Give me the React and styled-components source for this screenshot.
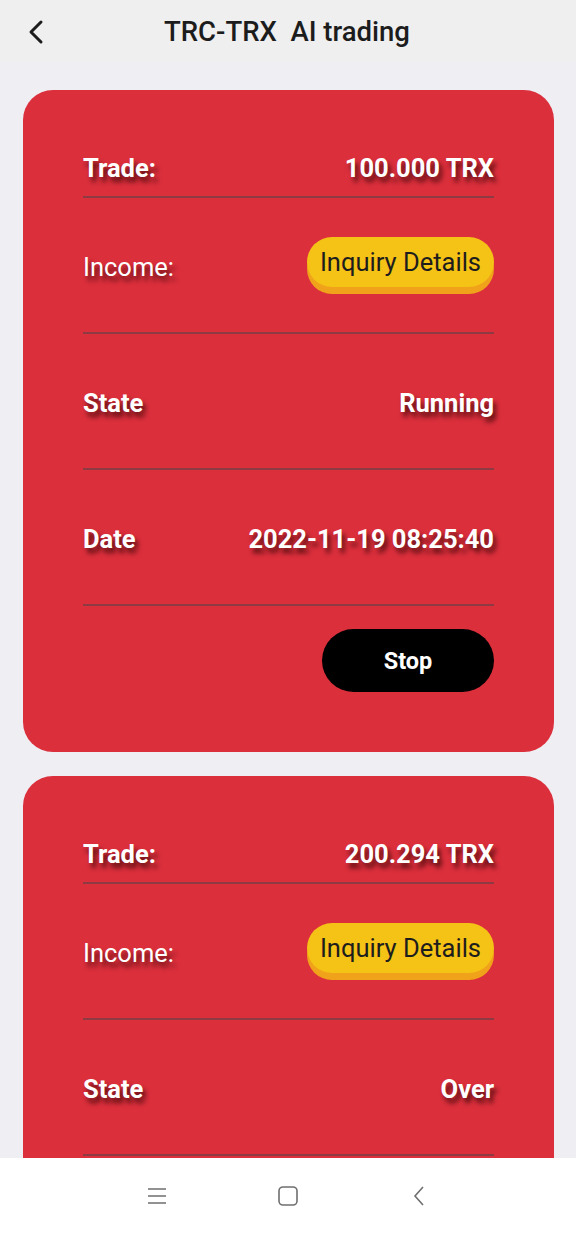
import React from "react"
import styled, { createGlobalStyle } from "styled-components"

const GlobalStyle = createGlobalStyle`
  html, body {
    margin: 0;
    padding: 0;
    background: #eeeef3;
    font-family: Roboto, "Noto Sans", sans-serif;
  }
`

const Page = styled.div`
  width: 576px;
  height: 1235px;
  display: flex;
  flex-direction: column;
  overflow: hidden;
  background: #eeeef3;
`

const Header = styled.header`
  flex: 0 0 62px;
  display: flex;
  align-items: center;
  justify-content: center;
  position: relative;
  background: #efefef;
`

const BackButton = styled.button`
  position: absolute;
  left: 22px;
  top: 17px;
  width: 28px;
  height: 30px;
  padding: 0;
  border: none;
  background: none;
  display: flex;
  align-items: center;
  justify-content: center;
`

const Title = styled.h1`
  margin: 0 0 0 -2px;
  font-size: 27.5px;
  font-weight: 500;
  color: #1c1c1c;
  white-space: pre;
`

const List = styled.main`
  flex: 1;
  overflow: hidden;
  display: flex;
  flex-direction: column;
  gap: 24px;
  padding: 28px 22px 0 23px;
`

const Card = styled.section`
  flex-shrink: 0;
  background: #dc2f3c;
  border-radius: 30px;
  padding: 44px 60px 60px;
  display: flex;
  flex-direction: column;
`

const Row = styled.div`
  height: ${(p) => (p.$first ? 64 : 136)}px;
  box-sizing: border-box;
  padding-top: ${(p) => (p.$first ? 6 : 4)}px;
  display: flex;
  align-items: center;
  justify-content: space-between;
  border-bottom: 2px solid #8e3a42;
`

const Label = styled.span`
  color: #fff;
  font-size: 25.5px;
  font-weight: ${(p) => (p.$light ? 400 : 700)};
  text-shadow: 3px 5px 5px rgba(40, 0, 0, 0.75);
`

const Value = styled(Label)`
  text-align: right;
`

const InquiryButton = styled.button`
  height: 50px;
  padding: 0 13px;
  border: none;
  border-radius: 25px;
  background: #f5c216;
  box-shadow: 0 7px 0 #f0a21a;
  margin-bottom: 10px;
  font-family: Roboto, sans-serif;
  font-size: 25.5px;
  color: #1d1d1d;
`

const Actions = styled.div`
  display: flex;
  justify-content: flex-end;
  padding-top: 23px;
`

const StopButton = styled.button`
  width: 172px;
  height: 63px;
  border: none;
  border-radius: 32px;
  background: #000;
  color: #fff;
  font-family: Roboto, sans-serif;
  font-size: 23.5px;
  font-weight: 700;
`

const NavBar = styled.nav`
  flex: 0 0 77px;
  background: #fff;
  display: flex;
  align-items: center;
  justify-content: center;
  gap: 109px;
  padding-bottom: 2px;
  box-sizing: border-box;
`

const NavIcon = styled.svg`
  width: 22px;
  height: 22px;
  stroke: #6f6f6f;
  stroke-width: 1.6;
  fill: none;
`

const trades = [
  {
    amount: "100.000 TRX",
    state: "Running",
    date: "2022-11-19 08:25:40",
    running: true,
  },
  { amount: "200.294 TRX", state: "Over", date: "2022-11-18 08:12:03" },
]

function TradeCard({ trade }) {
  return (
    <Card>
      <Row $first>
        <Label>Trade:</Label>
        <Value>{trade.amount}</Value>
      </Row>
      <Row>
        <Label $light>Income:</Label>
        <InquiryButton>Inquiry Details</InquiryButton>
      </Row>
      <Row>
        <Label>State</Label>
        <Value>{trade.state}</Value>
      </Row>
      <Row>
        <Label>Date</Label>
        <Value>{trade.date}</Value>
      </Row>
      {trade.running && (
        <Actions>
          <StopButton>Stop</StopButton>
        </Actions>
      )}
    </Card>
  )
}

export default function App() {
  return (
    <>
      <GlobalStyle />
      <Page>
        <Header>
          <BackButton aria-label="back">
            <svg width="18" height="26" viewBox="0 0 18 26">
              <path
                d="M14 3 L4 13 L14 23"
                stroke="#1c1c1c"
                strokeWidth="3"
                fill="none"
                strokeLinecap="round"
                strokeLinejoin="round"
              />
            </svg>
          </BackButton>
          <Title>{"TRC-TRX  AI trading"}</Title>
        </Header>
        <List>
          {trades.map((t) => (
            <TradeCard key={t.amount} trade={t} />
          ))}
        </List>
        <NavBar>
          <NavIcon viewBox="0 0 22 22">
            <path d="M2 4 H20 M2 11 H20 M2 18 H20" />
          </NavIcon>
          <NavIcon viewBox="0 0 22 22">
            <rect x="2" y="2" width="18" height="18" rx="4" />
          </NavIcon>
          <NavIcon viewBox="0 0 22 22">
            <path d="M15 2 L7 11 L15 20" />
          </NavIcon>
        </NavBar>
      </Page>
    </>
  )
}
